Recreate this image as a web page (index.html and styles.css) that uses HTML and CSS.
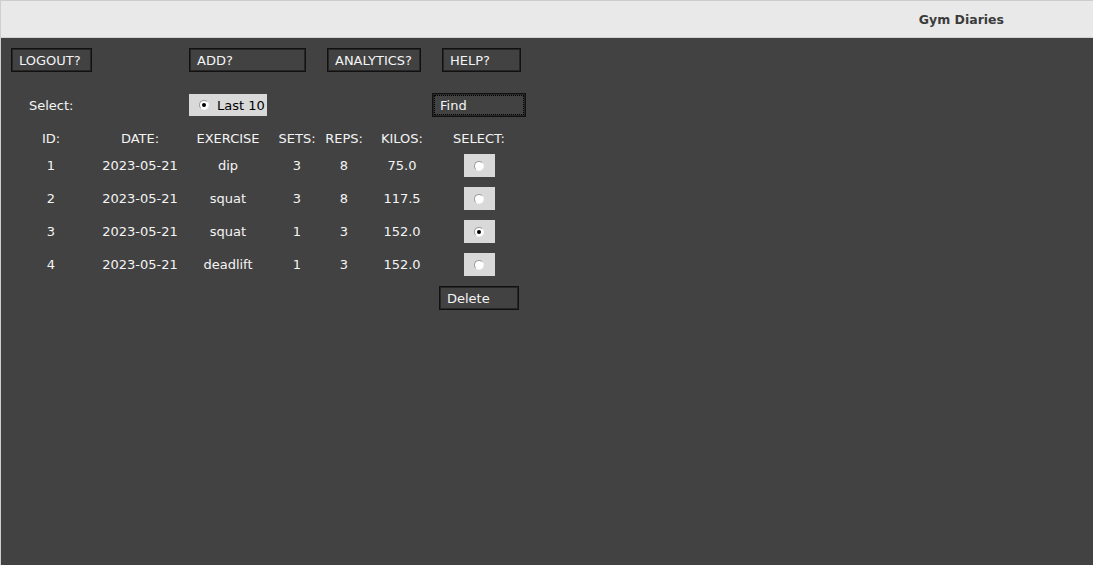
FILE: index.html
```html
<!DOCTYPE html>
<html>
<head>
<meta charset="utf-8">
<title>Gym Diaries</title>
<link rel="stylesheet" href="styles.css">
</head>
<body>
<div class="window">
  <header class="titlebar"><span class="title">Gym Diaries</span></header>
  <main class="app">
    <div class="toolbar">
      <button class="btn btn-logout">LOGOUT?</button>
      <button class="btn btn-add">ADD?</button>
      <button class="btn btn-analytics">ANALYTICS?</button>
      <button class="btn btn-help">HELP?</button>
    </div>
    <div class="filter">
      <span class="select-label">Select:</span>
      <label class="radio-box last10"><span class="radio checked"></span><span class="radio-text">Last 10</span></label>
      <button class="btn btn-find">Find</button>
    </div>
    <div class="table">
      <div class="cell head">ID:</div>
      <div class="cell head">DATE:</div>
      <div class="cell head">EXERCISE</div>
      <div class="cell head">SETS:</div>
      <div class="cell head">REPS:</div>
      <div class="cell head">KILOS:</div>
      <div class="cell head">SELECT:</div>

      <div class="cell">1</div>
      <div class="cell">2023-05-21</div>
      <div class="cell">dip</div>
      <div class="cell">3</div>
      <div class="cell">8</div>
      <div class="cell">75.0</div>
      <div class="cell"><span class="radio-box row-radio"><span class="radio"></span></span></div>

      <div class="cell">2</div>
      <div class="cell">2023-05-21</div>
      <div class="cell">squat</div>
      <div class="cell">3</div>
      <div class="cell">8</div>
      <div class="cell">117.5</div>
      <div class="cell"><span class="radio-box row-radio"><span class="radio"></span></span></div>

      <div class="cell">3</div>
      <div class="cell">2023-05-21</div>
      <div class="cell">squat</div>
      <div class="cell">1</div>
      <div class="cell">3</div>
      <div class="cell">152.0</div>
      <div class="cell"><span class="radio-box row-radio"><span class="radio checked"></span></span></div>

      <div class="cell">4</div>
      <div class="cell">2023-05-21</div>
      <div class="cell">deadlift</div>
      <div class="cell">1</div>
      <div class="cell">3</div>
      <div class="cell">152.0</div>
      <div class="cell"><span class="radio-box row-radio"><span class="radio"></span></span></div>

      <div class="delete-wrap"><button class="btn btn-delete">Delete</button></div>
    </div>
  </main>
</div>
</body>
</html>
```

FILE: styles.css
```css
html, body {
  margin: 0;
  padding: 0;
  width: 1093px;
  height: 565px;
  overflow: hidden;
  background: #424242;
}

.window {
  display: flex;
  flex-direction: column;
  width: 1093px;
  height: 565px;
  box-sizing: border-box;
  border-left: 1px solid #cfcfcf;
}

.titlebar {
  height: 38px;
  box-sizing: border-box;
  border-top: 1px solid #cdcdcd;
  border-bottom: 1px solid #d2d2d2;
  background: #e9e9e9;
  display: flex;
  align-items: center;
  justify-content: flex-end;
  padding-right: 89px;
}

.title {
  font-family: "DejaVu Sans", sans-serif;
  font-weight: bold;
  font-size: 12.5px;
  color: #3b3b3b;
  margin-top: 1px;
}

.app {
  flex: 1;
  padding: 10px 0 0 10px;
  font-family: "DejaVu Sans", sans-serif;
  font-size: 13px;
  color: #f4f4f4;
}

.btn {
  height: 24px;
  box-sizing: border-box;
  margin: 0;
  padding: 0 0 0 7px;
  background: #424242;
  color: #f4f4f4;
  font-family: "DejaVu Sans", sans-serif;
  font-size: 13px;
  text-align: left;
  border: 1px solid #111;
  box-shadow: inset 0 0 0 1px #262626;
  display: flex;
  align-items: center;
}

.toolbar {
  display: flex;
  height: 24px;
}

.btn-logout { width: 81px; }
.btn-add { width: 117px; margin-left: 97px; }
.btn-analytics { width: 94px; margin-left: 21px; }
.btn-help { width: 79px; margin-left: 21px; }

.filter {
  display: flex;
  align-items: center;
  height: 24px;
  margin-top: 21px;
}

.select-label {
  width: 178px;
  padding-left: 18px;
  box-sizing: border-box;
}

.radio-box {
  background: #d9d9d9;
  display: flex;
  align-items: center;
  box-sizing: border-box;
}

.last10 {
  width: 78px;
  height: 22px;
  padding-left: 10px;
  color: #000;
}

.radio-text {
  margin-left: 8px;
}

.radio {
  width: 10px;
  height: 10px;
  box-sizing: border-box;
  border-radius: 50%;
  background: #fff;
  border-top: 1px solid #9a9a9a;
  border-left: 1px solid #9a9a9a;
  border-right: 1px solid #f4f4f4;
  border-bottom: 1px solid #f4f4f4;
  display: flex;
  align-items: center;
  justify-content: center;
}

.radio.checked::after {
  content: "";
  width: 4px;
  height: 4px;
  border-radius: 50%;
  background: #000;
}

.btn-find {
  width: 94px;
  margin-left: 165px;
  outline: 1px dotted #000;
  outline-offset: -3px;
}

.table {
  display: grid;
  grid-template-columns: 88px 90px 86px 52px 42px 74px 80px;
  grid-template-rows: 22px repeat(4, 33px) auto;
  margin-top: 10px;
  margin-left: -4px;
}

.cell {
  display: flex;
  align-items: center;
  justify-content: center;
  white-space: nowrap;
}

.row-radio {
  width: 31px;
  height: 23px;
  justify-content: center;
}

.delete-wrap {
  grid-column: 7;
  padding-top: 5px;
}

.btn-delete {
  width: 80px;
}
```
